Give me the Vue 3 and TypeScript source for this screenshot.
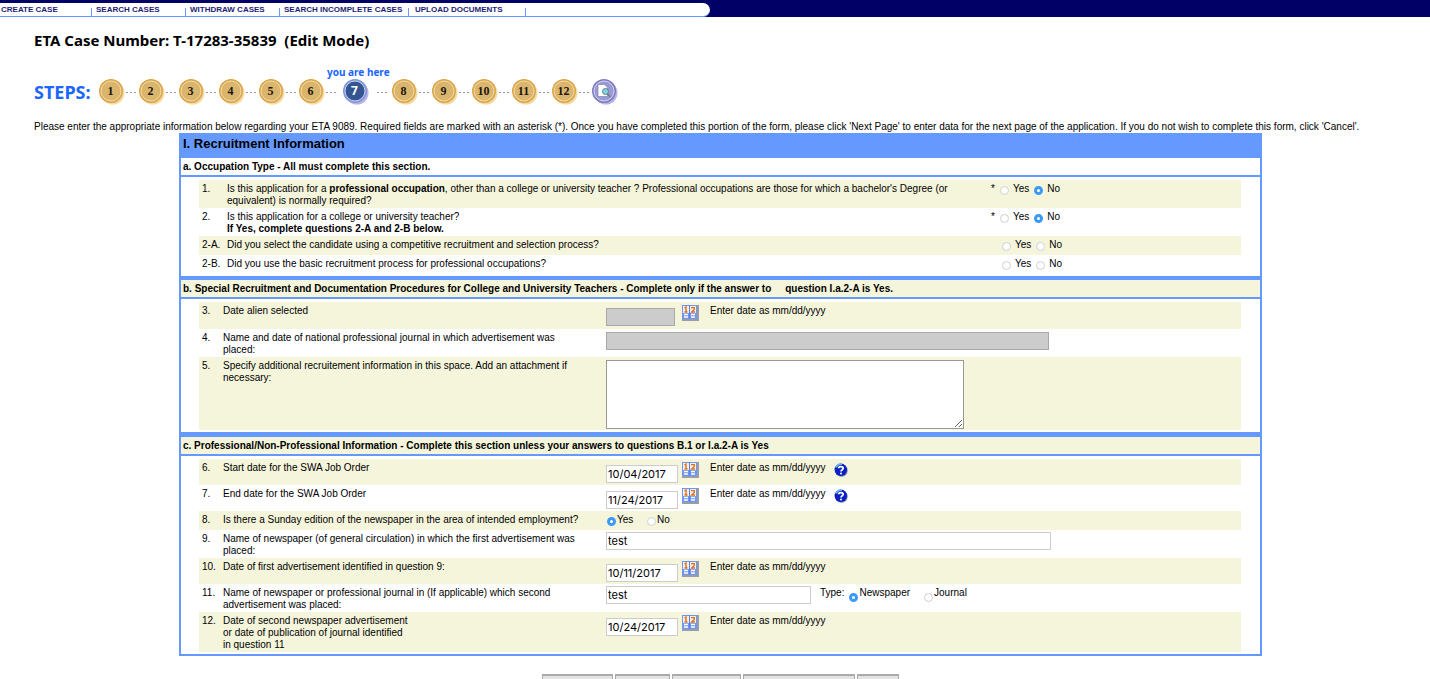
<script setup lang="ts">
import { ref } from 'vue'

interface YesNoRow {
  no: string
  text: string
  strong?: string
  rest?: string
  note?: string
  required: boolean
  value: string
}

const menu: { label: string; width: number }[] = [
  { label: 'CREATE CASE', width: 92 },
  { label: 'SEARCH CASES', width: 94 },
  { label: 'WITHDRAW CASES', width: 94 },
  { label: 'SEARCH INCOMPLETE CASES', width: 129 },
  { label: 'UPLOAD DOCUMENTS', width: 117 },
]

const steps = Array.from({ length: 12 }, (_, i) => i + 1)
const currentStep = 7

const occupation = ref<YesNoRow[]>([
  {
    no: '1.',
    text: 'Is this application for a ',
    strong: 'professional occupation',
    rest: ", other than a college or university teacher ? Professional occupations are those for which a bachelor's Degree (or equivalent) is normally required?",
    required: true,
    value: 'No',
  },
  {
    no: '2.',
    text: 'Is this application for a college or university teacher?',
    note: 'If Yes, complete questions 2-A and 2-B below.',
    required: true,
    value: 'No',
  },
  { no: '2-A.', text: 'Did you select the candidate using a competitive recruitment and selection process?', required: false, value: '' },
  { no: '2-B.', text: 'Did you use the basic recruitment process for professional occupations?', required: false, value: '' },
])

const swaStart = ref('10/04/2017')
const swaEnd = ref('11/24/2017')
const sunday = ref('Yes')
const firstPaper = ref('test')
const firstDate = ref('10/11/2017')
const secondPaper = ref('test')
const secondType = ref('Newspaper')
const secondDate = ref('10/24/2017')
const extra = ref('')

const actions: { name: string; width: number }[] = [
  { name: 'Previous Page', width: 71 },
  { name: 'Next Page', width: 55 },
  { name: 'Save Draft', width: 69 },
  { name: 'Save and Check Errors', width: 112 },
  { name: 'Cancel', width: 42 },
]
</script>

<template>
  <svg class="defs" aria-hidden="true">
    <symbol id="calendar" viewBox="0 0 17 16">
      <rect width="17" height="16" fill="#9a9ca6" />
      <rect width="15" height="14" fill="#6f95f5" />
      <rect x="1" y="1" width="6" height="7" fill="#f4efe6" />
      <rect x="8" y="1" width="6" height="7" fill="#f4efe6" />
      <path d="M2.5 3 L4 2 V7 M2.5 7 H5.5" stroke="#e0711c" stroke-width="1.4" fill="none" />
      <path d="M9 2.6 H12.3 L12.3 4.4 L9.6 7 H13" stroke="#e0711c" stroke-width="1.3" fill="none" />
      <path d="M2 9.5 H6 M2 12 H6 M9 9.5 H13 M9 12 H13" stroke="#fff" stroke-width="1.3" />
      <path d="M7.5 0 V14" stroke="#5b82ea" />
    </symbol>
    <symbol id="help" viewBox="0 0 14 14">
      <circle cx="7.5" cy="7.5" r="6.2" fill="#7d86a8" />
      <circle cx="6.8" cy="6.8" r="6.2" fill="#0a1fc4" />
      <path d="M2 4.5 A5.5 5.5 0 0 1 8 1.3" stroke="#6fb4e8" stroke-width="1.6" fill="none" />
      <path d="M4.6 5.3 C4.6 3 9.2 3 9.2 5.3 C9.2 6.8 7 6.7 7 8.6" stroke="#fff" stroke-width="1.7" fill="none" />
      <circle cx="7" cy="10.6" r="1" fill="#fff" />
    </symbol>
  </svg>

  <nav class="topbar">
    <div class="menu">
      <a v-for="m in menu" :key="m.label" href="#" :style="{ width: m.width + 'px' }">{{ m.label }}</a>
    </div>
  </nav>

  <main class="page">
    <h1>ETA Case Number: T-17283-35839 &nbsp;(Edit Mode)</h1>

    <div class="steps">
      <span class="steps-label">STEPS:</span>
      <ol>
        <li v-for="n in steps" :key="n" :class="{ current: n === currentStep }">
          <span class="node">
            <span v-if="n === currentStep" class="here">you are here</span>
            <svg width="26" height="26" viewBox="0 0 26 26">
              <circle cx="14" cy="14" r="11.5" class="shade" />
              <circle cx="12" cy="12" r="12" class="rim" />
              <circle cx="12" cy="12" r="10" class="face" />
              <text x="11.5" y="16" text-anchor="middle">{{ n }}</text>
            </svg>
          </span>
          <span class="dots"><i></i><i></i><i></i></span>
        </li>
        <li class="review">
          <span class="node">
            <svg width="26" height="26" viewBox="0 0 26 26">
              <circle cx="14" cy="14" r="11.5" class="shade" />
              <circle cx="12" cy="12" r="12" class="rim" />
              <circle cx="12" cy="12" r="10" class="face" />
              <path d="M6 5.5 H12.5 L15.5 8.5 V17.5 H6 Z" fill="#fff" stroke="#777799" stroke-width=".6" />
              <circle cx="13.5" cy="12.5" r="3" fill="#7fd3dc" stroke="#5f7f98" />
              <path d="M15.5 15 L18.5 18" stroke="#777" stroke-width="1.6" />
            </svg>
          </span>
        </li>
      </ol>
    </div>

    <p class="intro">Please enter the appropriate information below regarding your ETA 9089. Required fields are marked with an asterisk (*). Once you have completed this portion of the form, please click 'Next Page' to enter data for the next page of the application. If you do not wish to complete this form, click 'Cancel'.</p>

    <form @submit.prevent>
      <div class="frame">
        <h2>I. Recruitment Information</h2>

        <h3 class="plain">a. Occupation Type - All must complete this section.</h3>
        <section class="part first">
          <div v-for="q in occupation" :key="q.no" class="row wide">
            <span class="num">{{ q.no }}</span>
            <div :id="'q' + q.no" class="question">{{ q.text }}<b v-if="q.strong">{{ q.strong }}</b>{{ q.rest }}<b v-if="q.note" class="note">{{ q.note }}</b></div>
            <div class="yesno" :class="{ optional: !q.required }" role="radiogroup" :aria-labelledby="'q' + q.no">
              <span v-if="q.required" class="star">*</span>
              <label><input v-model="q.value" type="radio" :name="'q' + q.no" value="Yes">Yes</label>
              <label><input v-model="q.value" type="radio" :name="'q' + q.no" value="No">No</label>
            </div>
          </div>
        </section>

        <h3>b. Special Recruitment and Documentation Procedures for College and University Teachers - Complete only if the answer to &nbsp; &nbsp; question I.a.2-A is Yes.</h3>
        <section class="part">
          <div class="row date tall">
            <span class="num">3.</span>
            <label class="question" for="alien">Date alien selected</label>
            <div class="answer">
              <span class="date-slot"><input id="alien" class="date-box short" type="text" disabled></span>
              <button class="icon" type="button" aria-label="Calendar"><svg><use href="#calendar" /></svg></button>
              <span class="hint">Enter date as mm/dd/yyyy</span>
            </div>
          </div>
          <div class="row">
            <span class="num">4.</span>
            <label class="question" for="journal">Name and date of national professional journal in which advertisement was placed:</label>
            <div class="answer"><input id="journal" class="long disabled-long" type="text" disabled></div>
          </div>
          <div class="row">
            <span class="num">5.</span>
            <label class="question" for="extra">Specify additional recruitement information in this space. Add an attachment if necessary:</label>
            <div class="answer"><textarea id="extra" v-model="extra"></textarea></div>
          </div>
        </section>

        <h3>c. Professional/Non-Professional Information - Complete this section unless your answers to questions B.1 or I.a.2-A is Yes</h3>
        <section class="part last">
          <div class="row date">
            <span class="num">6.</span>
            <label class="question" for="start">Start date for the SWA Job Order</label>
            <div class="answer">
              <span class="date-slot"><input id="start" v-model="swaStart" class="date-box" type="text"></span>
              <button class="icon" type="button" aria-label="Calendar"><svg><use href="#calendar" /></svg></button>
              <span class="hint">Enter date as mm/dd/yyyy</span>
              <button class="icon help" type="button" aria-label="Help"><svg><use href="#help" /></svg></button>
            </div>
          </div>
          <div class="row date">
            <span class="num">7.</span>
            <label class="question" for="end">End date for the SWA Job Order</label>
            <div class="answer">
              <span class="date-slot"><input id="end" v-model="swaEnd" class="date-box" type="text"></span>
              <button class="icon" type="button" aria-label="Calendar"><svg><use href="#calendar" /></svg></button>
              <span class="hint">Enter date as mm/dd/yyyy</span>
              <button class="icon help" type="button" aria-label="Help"><svg><use href="#help" /></svg></button>
            </div>
          </div>
          <div class="row">
            <span class="num">8.</span>
            <span id="sunday" class="question">Is there a Sunday edition of the newspaper in the area of intended employment?</span>
            <div class="answer choice" role="radiogroup" aria-labelledby="sunday">
              <label><input v-model="sunday" type="radio" name="sunday" value="Yes">Yes</label>
              <label><input v-model="sunday" type="radio" name="sunday" value="No">No</label>
            </div>
          </div>
          <div class="row">
            <span class="num">9.</span>
            <label class="question" for="paper1">Name of newspaper (of general circulation) in which the first advertisement was placed:</label>
            <div class="answer"><input id="paper1" v-model="firstPaper" class="long" type="text"></div>
          </div>
          <div class="row date">
            <span class="num">10.</span>
            <label class="question" for="date1">Date of first advertisement identified in question 9:</label>
            <div class="answer">
              <span class="date-slot"><input id="date1" v-model="firstDate" class="date-box" type="text"></span>
              <button class="icon" type="button" aria-label="Calendar"><svg><use href="#calendar" /></svg></button>
              <span class="hint">Enter date as mm/dd/yyyy</span>
            </div>
          </div>
          <div class="row">
            <span class="num">11.</span>
            <label class="question" for="paper2">Name of newspaper or professional journal in (If applicable) which second advertisement was placed:</label>
            <div class="answer">
              <input id="paper2" v-model="secondPaper" class="medium" type="text">
              <div class="type" role="radiogroup" aria-labelledby="type">
                <span id="type">Type:</span>
                <label><input v-model="secondType" type="radio" name="type" value="Newspaper">Newspaper</label>
                <label><input v-model="secondType" type="radio" name="type" value="Journal">Journal</label>
              </div>
            </div>
          </div>
          <div class="row date">
            <span class="num">12.</span>
            <label class="question" for="date2">Date of second newspaper advertisement<br>or date of publication of journal identified<br>in question 11</label>
            <div class="answer">
              <span class="date-slot"><input id="date2" v-model="secondDate" class="date-box" type="text"></span>
              <button class="icon" type="button" aria-label="Calendar"><svg><use href="#calendar" /></svg></button>
              <span class="hint">Enter date as mm/dd/yyyy</span>
            </div>
          </div>
        </section>
      </div>

      <div class="actions">
        <button v-for="a in actions" :key="a.name" type="button" :aria-label="a.name" :style="{ width: a.width + 'px' }"></button>
      </div>
    </form>
  </main>
</template>

<style>
html { scrollbar-width: none; }
body { margin: 0; background: #fff; }
</style>

<style scoped>
* { box-sizing: border-box; }
.defs { display: none; }

.topbar {
  height: 17px;
  padding-top: 3px;
  background: #000066;
}
.menu {
  display: flex;
  width: 710px;
  height: 14px;
  background: #fff;
  border-bottom: 1px solid #6699ff;
  border-radius: 0 8px 8px 0;
}
.menu a {
  padding-left: 4px;
  color: #1c1c78;
  font: bold 8px/14px "Liberation Sans", Arial, sans-serif;
  text-decoration: none;
  white-space: nowrap;
  background: linear-gradient(#6699ff, #6699ff) right bottom / 1px 8px no-repeat;
}
.menu a:first-child { padding-left: 1px; }
.menu a:last-child { padding-left: 6px; }

.page {
  padding: 0 23px 0 34px;
  font: 10px/12px "Liberation Sans", Arial, sans-serif;
  color: #000;
}
h1 {
  margin: 15px 0 0;
  font: bold 15px/16px "Noto Sans", Verdana, sans-serif;
}
.steps {
  display: flex;
  align-items: center;
  height: 26px;
  margin-top: 31px;
}
.steps-label {
  width: 65px;
  color: #1a66ff;
  font: bold 18px/20px "Noto Sans", Verdana, sans-serif;
}
ol {
  display: flex;
  margin: 0;
  padding: 0;
  list-style: none;
}
li { display: flex; align-items: center; }
.node { position: relative; width: 24px; height: 26px; }
.node svg { display: block; overflow: visible; }
.shade { fill: #f3d9a4; }
.rim { fill: #dca545; }
.face { fill: #dab56e; stroke: #f2dcae; stroke-width: 1; }
.node text { font: bold 12px "Liberation Serif", serif; fill: #1c160c; }
.dots {
  display: flex;
  justify-content: center;
  gap: 2px;
  width: 16px;
}
.dots i { width: 2px; height: 1px; background: #999; }
.current .node { margin: 0 5px 0 4px; }
.current .dots { width: 20px; }
.current .shade, .review .shade { fill: #b9b3ea; }
.current .rim { fill: #7f97d8; }
.current .face { fill: #34558f; stroke: #c7d3f2; }
.current .node text { font: bold 12px "Noto Sans", sans-serif; fill: #fff; }
.review .rim { fill: #7d7dbb; }
.review .face { fill: #9a9ad6; stroke: #d5d5f2; }
.here {
  position: absolute;
  top: -13px;
  left: -16px;
  color: #1a66ff;
  font: bold 10px/12px "Noto Sans", Verdana, sans-serif;
  white-space: nowrap;
}
.intro { margin: 16px 0 0; line-height: 12px; white-space: nowrap; }

.frame {
  margin: 0 145px;
  border: 2px solid #6699ff;
  border-top: 0;
}
h2 {
  height: 25px;
  margin: 0;
  padding: 3px 2px;
  background: #6699ff;
  font: bold 13px/16px "Liberation Sans", Arial, sans-serif;
}
h3 {
  margin: 0;
  padding: 3px 2px 2px;
  border-bottom: 2px solid #6699ff;
  background: #f5f5dc;
  font: bold 10px/12px "Liberation Sans", Arial, sans-serif;
}
h3.plain { background: #fff; }
.part {
  padding: 3px 19px 2px 18px;
  border-bottom: 5px solid #6699ff;
}
.part.first { border-bottom-width: 4px; }
.part.last { border-bottom: 0; }
.row {
  display: grid;
  grid-template-columns: 24px 383px 1fr;
  padding: 3px 0 1px;
}
.row.wide { grid-template-columns: 28px 1fr 250px; }
.row:nth-child(odd) { background: #f5f5dc; }
.wide { min-height: 19px; }
.num { padding-left: 3px; white-space: nowrap; }
.question { padding-right: 22px; }
.note { display: block; }

.yesno { display: flex; align-items: flex-start; }
.star { width: 9px; }
.optional { padding-left: 11px; }
.yesno label { display: flex; gap: 4px; margin-right: 5px; }
input[type="radio"] {
  appearance: none;
  flex: none;
  width: 9px;
  height: 9px;
  margin: 3px 0 0;
  border: 1px solid #d0d0d0;
  border-radius: 50%;
  background: #fff;
}
input[type="radio"]:checked { border: 3px solid #3b99fc; }

.answer {
  display: flex;
  align-items: flex-start;
  min-height: 16px;
  margin-top: -1px;
}
.choice label {
  display: flex;
  width: 40px;
  padding: 1px 0 0 1px;
  gap: 1px;
}
input[type="text"] {
  height: 18px;
  padding: 1px;
  border: 1px solid #ccc;
  background: #fff;
  font: 11px/14px Inter, sans-serif;
  color: #000;
}
input[type="text"]:disabled { border: 1px solid #a9a9a9; background: #ccc; }
.long { width: 445px; }
.long.disabled-long { width: 443px; margin-top: 1px; }
.medium { width: 205px; }
.date-slot { display: flex; width: 76px; padding-top: 4px; }
.date-box { width: 72px; }
.date-box.short { width: 69px; }
.icon { margin-top: 1px; padding: 0; border: 0; background: none; }
.icon svg { display: block; width: 17px; height: 16px; }
.hint { margin-left: 11px; padding-top: 1px; }
.icon.help { margin: 2px 0 0 8px; }
.help svg { width: 14px; height: 14px; }
.row.date { padding-bottom: 0; min-height: 26px; }
.row.date.tall { min-height: 27px; }
.row.date:last-child { padding-bottom: 1px; }
textarea {
  display: block;
  width: 358px;
  height: 69px;
  margin-top: 1px;
  border: 1px solid #999;
  background: #fff;
  font: 11px/14px Inter, sans-serif;
  resize: both;
}
.type { display: flex; margin-left: 9px; padding-top: 1px; }
.type label { display: flex; gap: 1px; margin-left: 5px; }
.type label + label { margin-left: 14px; }
.type input[type="radio"] { margin-top: 6px; }

.actions {
  display: flex;
  justify-content: center;
  gap: 2px;
  padding: 18px 0 8px;
}
.actions button {
  height: 20px;
  padding: 0;
  border: 1px solid #aaa;
  border-width: 2px 1px;
  background: #e4e4e4;
}
</style>
